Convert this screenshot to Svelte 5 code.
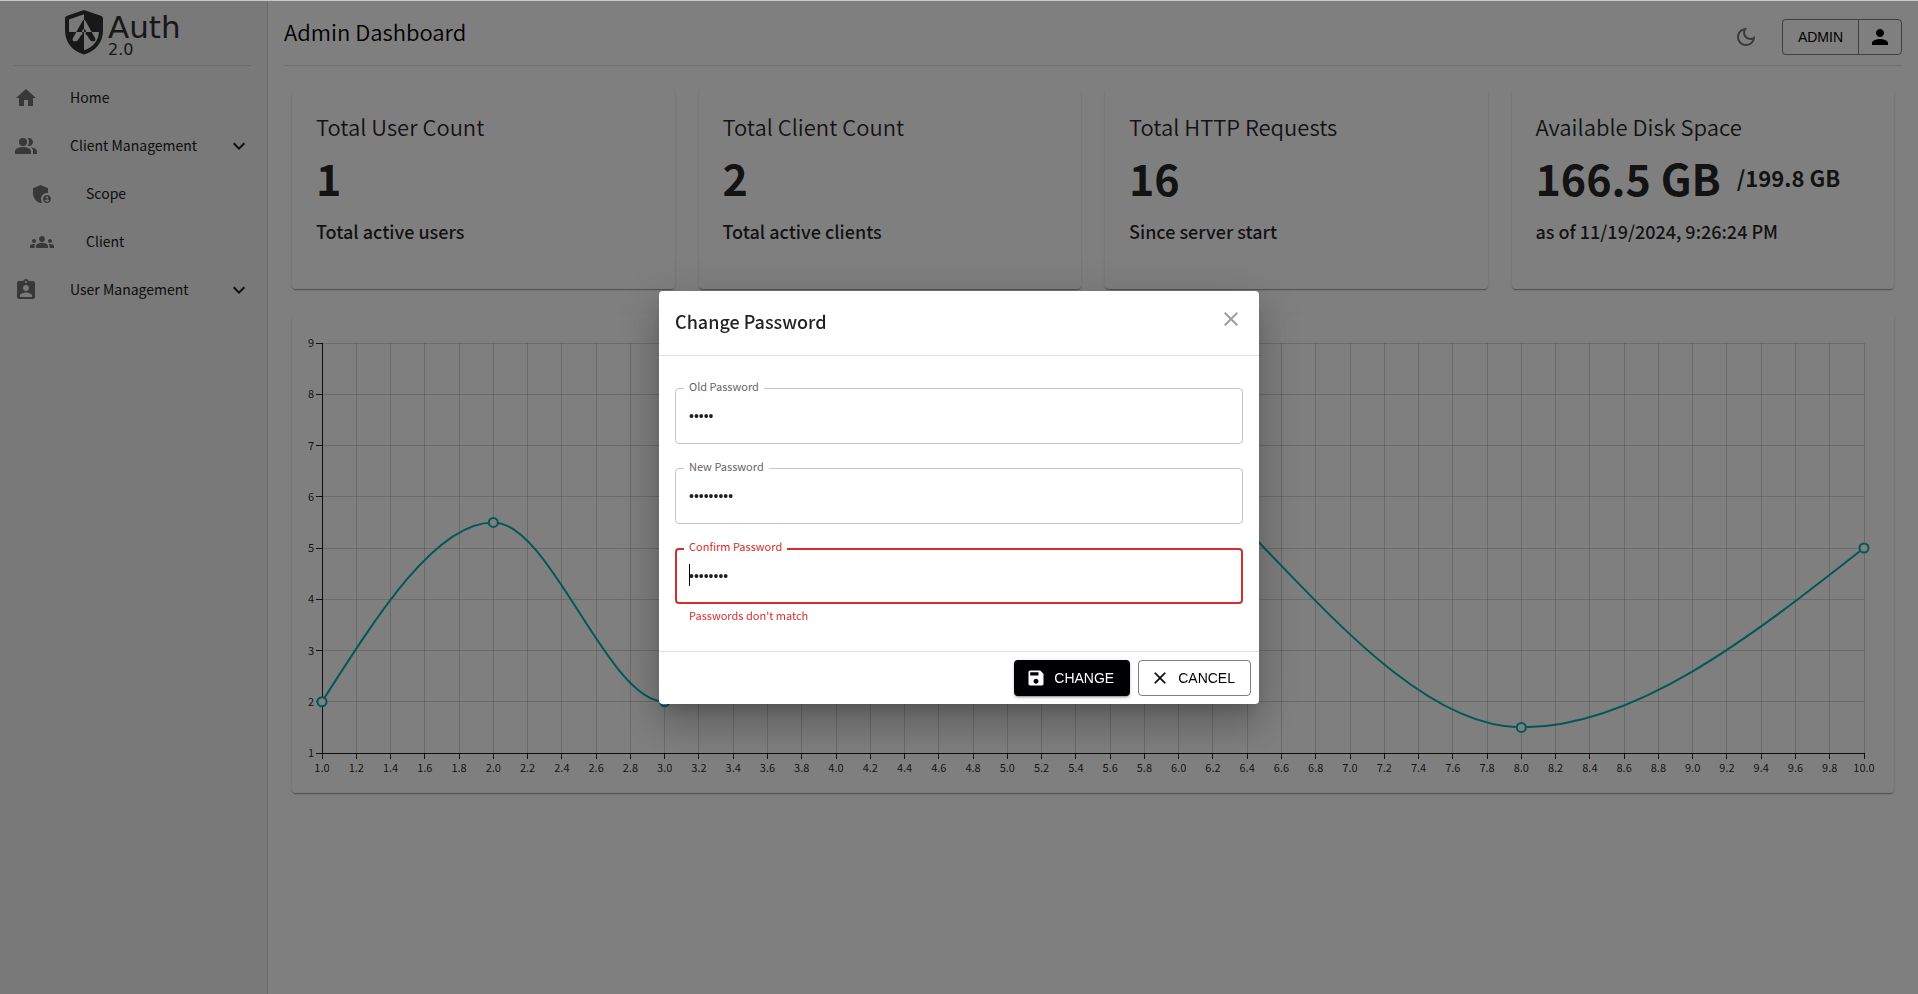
<script>
  const icons = {
    home: ['M10 20v-6h4v6h5v-8h3L12 3 2 12h3v8z'],
    people: [
      'M16.67 13.13C18.04 14.06 19 15.32 19 17v3h4v-3c0-2.18-3.57-3.47-6.33-3.87z',
      'M9 4a4 4 0 1 0 0 8 4 4 0 0 0 0-8z',
      'M15 12c2.21 0 4-1.79 4-4s-1.79-4-4-4c-.47 0-.91.1-1.33.24C14.5 5.27 15 6.58 15 8s-.5 2.73-1.33 3.76c.42.14.86.24 1.33.24zM9 13c-2.67 0-8 1.34-8 4v3h16v-3c0-2.66-5.33-4-8-4z'
    ],
    scope: [
      'M17 11c.34 0 .67.04 1 .09V6.27L10.5 3 3 6.27v4.91c0 4.54 3.2 8.79 7.5 9.82.55-.13 1.08-.32 1.6-.55-.69-.98-1.1-2.17-1.1-3.45 0-3.31 2.69-6 6-6z',
      'M17 13c-2.21 0-4 1.79-4 4s1.79 4 4 4 4-1.79 4-4-1.79-4-4-4m0 1.38c.62 0 1.12.51 1.12 1.12s-.51 1.12-1.12 1.12-1.12-.51-1.12-1.12.5-1.12 1.12-1.12m0 5.37c-.93 0-1.74-.46-2.24-1.17.05-.72 1.51-1.08 2.24-1.08s2.19.36 2.24 1.08c-.5.71-1.31 1.17-2.24 1.17'
    ],
    groups: [
      'M12 12.75c1.63 0 3.07.39 4.24.9 1.08.48 1.76 1.56 1.76 2.73V18H6v-1.61c0-1.18.68-2.26 1.76-2.73 1.17-.52 2.61-.91 4.24-.91M4 13c1.1 0 2-.9 2-2s-.9-2-2-2-2 .9-2 2 .9 2 2 2m1.13 1.1c-.37-.06-.74-.1-1.13-.1-.99 0-1.93.21-2.78.58C.48 14.9 0 15.62 0 16.43V18h4.5v-1.61c0-.83.23-1.61.63-2.29M20 13c1.1 0 2-.9 2-2s-.9-2-2-2-2 .9-2 2 .9 2 2 2m4 3.43c0-.81-.48-1.53-1.22-1.85-.85-.37-1.79-.58-2.78-.58-.39 0-.76.04-1.13.1.4.68.63 1.46.63 2.29V18H24zM12 6c1.66 0 3 1.34 3 3s-1.34 3-3 3-3-1.34-3-3 1.34-3 3-3'
    ],
    badge: [
      'M19 3h-4.18C14.4 1.84 13.3 1 12 1s-2.4.84-2.82 2H5c-1.1 0-2 .9-2 2v14c0 1.1.9 2 2 2h14c1.1 0 2-.9 2-2V5c0-1.1-.9-2-2-2m-7 0c.55 0 1 .45 1 1s-.45 1-1 1-1-.45-1-1 .45-1 1-1m0 4c1.66 0 3 1.34 3 3s-1.34 3-3 3-3-1.34-3-3 1.34-3 3-3m6 12H6v-1.4c0-2 4-3.1 6-3.1s6 1.1 6 3.1z'
    ],
    expand: ['M16.59 8.59 12 13.17 7.41 8.59 6 10l6 6 6-6z'],
    moon: [
      'M9.37 5.51c-.18.64-.27 1.31-.27 1.99 0 4.08 3.32 7.4 7.4 7.4.68 0 1.35-.09 1.99-.27C17.45 17.19 14.93 19 12 19c-3.86 0-7-3.14-7-7 0-2.93 1.81-5.45 4.37-6.49M12 3c-4.97 0-9 4.03-9 9s4.03 9 9 9 9-4.03 9-9c0-.46-.04-.92-.1-1.36-.98 1.37-2.58 2.26-4.4 2.26-2.98 0-5.4-2.42-5.4-5.4 0-1.81.89-3.42 2.26-4.4-.44-.06-.9-.1-1.36-.1'
    ],
    person: ['M12 12c2.21 0 4-1.79 4-4s-1.79-4-4-4-4 1.79-4 4 1.79 4 4 4m0 2c-2.67 0-8 1.34-8 4v2h16v-2c0-2.66-5.33-4-8-4'],
    close: ['M19 6.41 17.59 5 12 10.59 6.41 5 5 6.41 10.59 12 5 17.59 6.41 19 12 13.41 17.59 19 19 17.59 13.41 12z'],
    save: ['M17 3H5c-1.11 0-2 .9-2 2v14c0 1.1.89 2 2 2h14c1.1 0 2-.9 2-2V7zm-5 16c-1.66 0-3-1.34-3-3s1.34-3 3-3 3 1.34 3 3-1.34 3-3 3m3-10H5V5h10z']
  };

  const nav = [
    { label: 'Home', icon: 'home' },
    { label: 'Client Management', icon: 'people', open: true },
    { label: 'Scope', icon: 'scope', nested: true },
    { label: 'Client', icon: 'groups', nested: true },
    { label: 'User Management', icon: 'badge', open: true }
  ];

  const stats = [
    { title: 'Total User Count', value: '1', note: 'Total active users' },
    { title: 'Total Client Count', value: '2', note: 'Total active clients' },
    { title: 'Total HTTP Requests', value: '16', note: 'Since server start' },
    { title: 'Available Disk Space', value: '166.5 GB', total: '/199.8 GB', note: 'as of 11/19/2024, 9:26:24 PM' }
  ];

  let oldPassword = $state('admin');
  let newPassword = $state('changeme1');
  let confirmPassword = $state('changeme');
  let mismatch = $derived(newPassword !== confirmPassword);

  // Chart geometry
  const margin = { top: 30, right: 30, bottom: 40, left: 30 };
  const chartHeight = 480;
  const plotBottom = chartHeight - margin.bottom;
  let chartWidth = $state(1602);
  let plotRight = $derived(chartWidth - margin.right);

  const data = [[1, 2], [2, 5.5], [3, 2], [5, 8.5], [8, 1.5], [10, 5]];
  const xTicks = Array.from({ length: 46 }, (_, i) => 1 + i / 5);
  const yTicks = [1, 2, 3, 4, 5, 6, 7, 8, 9];

  const sx = (v, right) => margin.left + ((v - 1) / 9) * (right - margin.left);
  const sy = (v) => plotBottom - ((v - 1) / 8) * (plotBottom - margin.top);

  let points = $derived(data.map(([x, y]) => [sx(x, plotRight), sy(y)]));

  // Monotone cubic interpolation in x
  function monotone(p) {
    const n = p.length;
    const h = [];
    const s = [];
    for (let i = 0; i < n - 1; i++) {
      h[i] = p[i + 1][0] - p[i][0];
      s[i] = (p[i + 1][1] - p[i][1]) / h[i];
    }
    const t = [];
    for (let i = 1; i < n - 1; i++) {
      const q = (s[i - 1] * h[i] + s[i] * h[i - 1]) / (h[i - 1] + h[i]);
      t[i] = (Math.sign(s[i - 1]) + Math.sign(s[i])) * Math.min(Math.abs(s[i - 1]), Math.abs(s[i]), 0.5 * Math.abs(q));
    }
    t[0] = (3 * s[0] - t[1]) / 2;
    t[n - 1] = (3 * s[n - 2] - t[n - 2]) / 2;
    let d = `M${p[0][0]},${p[0][1]}`;
    for (let i = 0; i < n - 1; i++) {
      const k = h[i] / 3;
      d += `C${p[i][0] + k},${p[i][1] + k * t[i]},${p[i + 1][0] - k},${p[i + 1][1] - k * t[i + 1]},${p[i + 1][0]},${p[i + 1][1]}`;
    }
    return d;
  }
  let curve = $derived(monotone(points));
</script>

{#snippet icon(name, size = 24)}
  <svg class="icon" width={size} height={size} viewBox="0 0 24 24" aria-hidden="true">
    {#each icons[name] as d}<path {d} />{/each}
  </svg>
{/snippet}

<div class="page">
  <aside class="sidebar">
    <div class="brand">
      <svg width="38" height="45" viewBox="0 0 38 45" aria-hidden="true">
        <defs>
          <clipPath id="even"><path d="M0 0H19V22H0zM19 22H38V45H19z" /></clipPath>
          <clipPath id="odd"><path d="M19 0H38V22H19zM0 22H19V45H0z" /></clipPath>
        </defs>
        <path class="ink" d="M19 0 36.5 6Q38 6.600 38 8.500V20C38 33 30.500 41 19 44.500 7.500 41 0 33 0 20V8.500Q0 6.600 1.500 6z" />
        <path class="paper" clip-path="url(#even)" d="M19 4.300 34 9.500V20C34 30.500 28.500 37 19 40.300 9.500 37 4 30.500 4 20V9.500z" />
        <g class="arrow">
          <path class="ink" clip-path="url(#even)" d="M17.200 11.500Q19 8 20.800 11.500L30.300 28.500Q31 31.500 28 31.300 25.200 31.200 24 28.500 22.500 25 20.500 24L21 21 19 18.500 17 21 17.500 24Q15.500 25 14 28.500 12.800 31.200 10 31.300 7 31.500 7.700 28.500z" />
          <path class="paper" clip-path="url(#odd)" d="M17.200 11.500Q19 8 20.800 11.500L30.300 28.500Q31 31.500 28 31.300 25.200 31.200 24 28.500 22.500 25 20.500 24L21 21 19 18.500 17 21 17.500 24Q15.500 25 14 28.500 12.800 31.200 10 31.300 7 31.500 7.700 28.500z" />
        </g>
      </svg>
      <div class="wordmark">
        <span class="auth">Auth</span>
        <span class="version">2.0</span>
      </div>
    </div>
    <nav>
      {#each nav as item}
        <button class="nav-item" class:nested={item.nested}>
          <span class="nav-icon">{@render icon(item.icon)}</span>
          <span class="nav-label">{item.label}</span>
          {#if item.open}{@render icon('expand')}{/if}
        </button>
      {/each}
    </nav>
  </aside>

  <main>
    <header>
      <h1>Admin Dashboard</h1>
      <div class="tools">
        <button class="icon-button moon" aria-label="Toggle dark mode">{@render icon('moon')}</button>
        <div class="group">
          <button class="btn outlined">ADMIN</button>
          <button class="btn outlined avatar" aria-label="Account">{@render icon('person')}</button>
        </div>
      </div>
    </header>

    <div class="content">
      <section class="stats">
        {#each stats as s}
          <article class="card stat">
            <h2>{s.title}</h2>
            <p class="value">{s.value}{#if s.total}<span class="total">{s.total}</span>{/if}</p>
            <p class="note">{s.note}</p>
          </article>
        {/each}
      </section>

      <section class="card chart" bind:clientWidth={chartWidth}>
        <svg width={chartWidth} height={chartHeight} role="img" aria-label="Line chart">
          <g class="grid">
            {#each xTicks as t}
              <line x1={sx(t, plotRight)} x2={sx(t, plotRight)} y1={margin.top} y2={plotBottom} />
            {/each}
            {#each yTicks as t}
              <line x1={margin.left} x2={plotRight} y1={sy(t)} y2={sy(t)} />
            {/each}
          </g>
          <path class="series" d={curve} />
          <g class="axis">
            <line x1={margin.left} x2={plotRight} y1={plotBottom} y2={plotBottom} />
            <line x1={margin.left} x2={margin.left} y1={margin.top} y2={plotBottom} />
            {#each xTicks as t}
              <line x1={sx(t, plotRight)} x2={sx(t, plotRight)} y1={plotBottom} y2={plotBottom + 6} />
              <text x={sx(t, plotRight)} y={plotBottom + 19} text-anchor="middle">{t.toFixed(1)}</text>
            {/each}
            {#each yTicks as t}
              <line x1={margin.left - 6} x2={margin.left} y1={sy(t)} y2={sy(t)} />
              <text x={margin.left - 8} y={sy(t) + 4} text-anchor="end">{t}</text>
            {/each}
          </g>
          {#each points as [x, y]}<circle cx={x} cy={y} r="4.5" />{/each}
        </svg>
      </section>
    </div>
  </main>

  <div class="backdrop">
    <form class="dialog" role="dialog" aria-modal="true" aria-labelledby="dialog-title" onsubmit={(e) => e.preventDefault()}>
      <div class="dialog-head">
        <h2 id="dialog-title">Change Password</h2>
        <button type="button" class="icon-button close" aria-label="Close">{@render icon('close')}</button>
      </div>
      <div class="dialog-body">
        <div class="field">
          <label for="old">Old Password</label>
          <input id="old" type="password" bind:value={oldPassword} />
        </div>
        <div class="field">
          <label for="new">New Password</label>
          <input id="new" type="password" bind:value={newPassword} />
        </div>
        <div>
          <div class="field" class:error={mismatch}>
            <label for="confirm">Confirm Password</label>
            <input id="confirm" type="password" bind:value={confirmPassword} aria-invalid={mismatch} aria-describedby="confirm-help" />
            <span class="caret"></span>
          </div>
          {#if mismatch}<p class="helper" id="confirm-help">Passwords don't match</p>{/if}
        </div>
      </div>
      <div class="dialog-actions">
        <button type="submit" class="btn contained">{@render icon('save', 20)}CHANGE</button>
        <button type="button" class="btn outlined with-icon">{@render icon('close', 20)}CANCEL</button>
      </div>
    </form>
  </div>
</div>

<style>
  :global(body) {
    background: #fff;
    font-family: 'Noto Sans CJK SC', 'Noto Sans', sans-serif;
  }
  .page {
    box-sizing: border-box;
    display: flex;
    min-height: 100vh;
    border-top: 1px solid #c8cac9;
    color: rgba(0, 0, 0, 0.87);
  }
  h1, h2, p { margin: 0; font-weight: 400; }
  button, input { font: inherit; color: inherit; }
  button { cursor: pointer; }
  .icon { display: block; fill: currentColor; flex: none; }

  .sidebar {
    box-sizing: border-box;
    width: 268px;
    flex: none;
    background: #f2f2f2;
    border-right: 1px solid #d4d4d4;
  }
  .brand {
    box-sizing: border-box;
    height: 65px;
    margin: 0 16px 0 14px;
    padding: 9px 0 0 51px;
    display: flex;
    gap: 5px;
    border-bottom: 1px solid #d4d4d4;
  }
  .ink { fill: #303030; }
  .paper { fill: #f2f2f2; }
  .wordmark {
    display: flex;
    flex-direction: column;
    color: #303030;
    font-family: 'DejaVu Sans', sans-serif;
  }
  .auth { font-size: 31px; line-height: 34px; }
  .version { font-size: 16px; line-height: 12px; }
  nav { display: flex; flex-direction: column; padding: 8px 0; }
  .nav-item {
    display: flex;
    align-items: center;
    height: 48px;
    padding: 0 16px 0 14px;
    border: 0;
    background: none;
    text-align: left;
    color: #202020;
    font-size: 14px;
    line-height: 24px;
  }
  .nav-item.nested { padding-left: 30px; }
  .nav-icon { width: 56px; color: #717171; }
  .nav-label { flex: 1; padding-bottom: 2px; }

  main { flex: 1; min-width: 0; padding: 0 16px; }
  header {
    box-sizing: border-box;
    height: 65px;
    display: flex;
    justify-content: space-between;
    border-bottom: 1px solid #e0e0e0;
  }
  h1, .stat h2 { font-size: 22px; font-weight: 350; }
  h1 { padding-top: 14px; color: #000; line-height: 32px; }
  .tools { display: flex; align-items: center; gap: 16px; padding-top: 8px; }
  .icon-button {
    width: 40px;
    height: 40px;
    padding: 8px;
    border: 0;
    background: none;
  }
  .moon { color: #757575; }
  .group { display: flex; }
  .btn {
    box-sizing: border-box;
    height: 36px;
    padding: 0 16px;
    display: flex;
    align-items: center;
    gap: 8px;
    border: 0;
    border-radius: 4px;
    font-family: 'Liberation Sans', Arial, sans-serif;
    font-size: 14px;
    line-height: 24px;
  }
  .outlined {
    padding: 0 15px;
    border: 1px solid rgba(0, 0, 0, 0.5);
    background: none;
    color: #000;
  }
  .group .outlined:first-child { border-right: 0; border-radius: 4px 0 0 4px; }
  .group .avatar { padding: 0 9px; border-radius: 0 4px 4px 0; }

  .content { display: grid; gap: 24px; padding: 23px 8px; }
  .stats { display: grid; grid-template-columns: repeat(4, minmax(0, 1fr)); gap: 24px; }
  .card {
    background: #fff;
    border-radius: 4px;
    box-shadow: 0 2px 1px -1px rgba(0, 0, 0, 0.2), 0 1px 1px rgba(0, 0, 0, 0.14), 0 1px 3px rgba(0, 0, 0, 0.12);
  }
  .stat {
    box-sizing: border-box;
    min-height: 200px;
    padding: 24px;
    display: flex;
    flex-direction: column;
    gap: 8px;
  }
  .stat h2 { line-height: 26px; }
  .value {
    display: flex;
    align-items: center;
    gap: 16px;
    font-size: 43px;
    font-weight: 700;
    line-height: 60px;
    white-space: nowrap;
  }
  .total { font-size: 22px; line-height: 32px; }
  .note { font-size: 18px; font-weight: 500; line-height: 32px; }

  .chart svg { display: block; }
  .grid line { stroke: rgba(0, 0, 0, 0.16); shape-rendering: crispEdges; }
  .axis line { stroke: rgba(0, 0, 0, 0.87); shape-rendering: crispEdges; }
  .axis text { fill: rgba(0, 0, 0, 0.87); font-size: 11px; }
  .series { fill: none; stroke: #02b2af; stroke-width: 2; }
  circle { fill: #fff; stroke: #02b2af; stroke-width: 2; }

  .backdrop {
    position: fixed;
    inset: 1px 0 0;
    display: flex;
    align-items: center;
    justify-content: center;
    background: rgba(0, 0, 0, 0.5);
  }
  .dialog {
    width: 600px;
    max-width: calc(100% - 64px);
    background: #fff;
    border-radius: 4px;
    box-shadow: 0 11px 15px -7px rgba(0, 0, 0, 0.2), 0 24px 38px 3px rgba(0, 0, 0, 0.14), 0 9px 46px 8px rgba(0, 0, 0, 0.12);
  }
  .dialog-head { display: flex; justify-content: space-between; padding: 8px 8px 8px 16px; }
  .dialog-head h2 { padding: 8px 0 12px; font-size: 18px; font-weight: 500; line-height: 28px; }
  .close { color: #9e9e9e; }
  .dialog-body {
    display: grid;
    gap: 24px;
    padding: 32px 16px 24px;
    border-top: 1px solid #e0e0e0;
    border-bottom: 1px solid #e0e0e0;
  }
  .field { position: relative; }
  .field label {
    position: absolute;
    top: -12px;
    left: 9px;
    padding: 0 5px;
    background: #fff;
    color: #666;
    font-size: 11px;
    line-height: 20px;
  }
  .field input {
    box-sizing: border-box;
    display: block;
    width: 100%;
    height: 56px;
    padding: 0 13px;
    border: 1px solid #c4c4c4;
    border-radius: 4px;
    outline: 0;
    background: none;
    font-family: 'Liberation Sans', Arial, sans-serif;
    font-size: 14px;
  }
  .error label, .helper { color: #d32f2f; }
  .field.error input { padding: 0 12px; border: 2px solid #d32f2f; }
  .caret {
    position: absolute;
    top: 16px;
    left: 14px;
    width: 1px;
    height: 22px;
    background: #000;
  }
  .helper { margin: 2px 14px 3px; font-size: 11px; line-height: 18px; }
  .dialog-actions { display: flex; justify-content: flex-end; gap: 8px; padding: 8px; }
  .contained {
    padding-left: 12px;
    background: #000003;
    color: #fff;
    box-shadow: 0 3px 1px -2px rgba(0, 0, 0, 0.2), 0 2px 2px rgba(0, 0, 0, 0.14), 0 1px 5px rgba(0, 0, 0, 0.12);
  }
  .with-icon { padding-left: 11px; }
</style>
